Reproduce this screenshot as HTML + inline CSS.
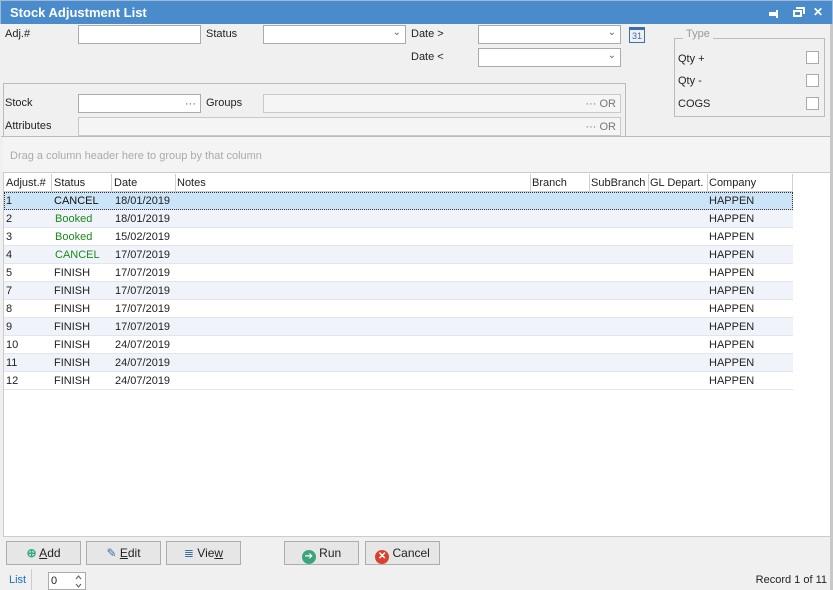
<!DOCTYPE html><html><head><style>
*{box-sizing:border-box;margin:0;padding:0}
body{width:833px;height:590px;background:#f0f0f0;font-family:"Liberation Sans",sans-serif;font-size:11px;color:#222;position:relative;overflow:hidden}
.a{position:absolute}
.tb{left:0;top:0;width:833px;height:24px;background:#4a8ccb;border:1px solid #9fb9d6;border-bottom:none}
.tt{left:9px;top:4px;color:#fff;font-weight:bold;font-size:13px}
.in{background:#fff;border:1px solid #ababab;height:19px}
.dis{background:#f5f5f5;border:1px solid #c8c8c8;height:19px}
.lbl{font-size:11px}
.dd{font-size:10px;color:#666;right:4px;top:1px;position:absolute}
.or{position:absolute;right:4px;top:3px;color:#777;font-size:11px}
.cb{width:13px;height:13px;background:#fff;border:1px solid #aaa}
.btn{height:24px;border:1px solid #adadad;background:#e6e6e6;text-align:center;line-height:22px;font-size:12px}
.row{position:absolute;left:4px;width:789px;height:18px;border-bottom:1px solid #e2e6ec;font-size:11px}
.row span{position:absolute;top:3px}
.hd span{position:absolute;top:3px}
.cl{position:absolute;top:0;height:18px;border-left:1px solid #d0d0d0}
</style></head><body>
<div class="a tb"><div class="a tt">Stock Adjustment List</div>
<div class="a" style="right:54px;top:11px;width:9px;height:4px;background:#fff"></div>
<div class="a" style="right:54px;top:9px;width:2px;height:8px;background:#fff"></div>
<div class="a" style="right:30px;top:9px;width:9px;height:7px;border:2px solid #fff"></div>
<div class="a" style="right:27px;top:6px;width:9px;height:7px;border-top:2px solid #fff;border-right:2px solid #fff"></div>
<div class="a" style="right:9px;top:4px;color:#fff;font-size:12px;font-weight:bold">✕</div></div>
<div class="a" style="right:0;top:24px;width:3px;height:566px;background:#c8c8c8"></div>

<div class="a lbl" style="left:5px;top:28px">Adj.#</div>
<div class="a in" style="left:78px;top:25px;width:123px"></div>
<div class="a lbl" style="left:206px;top:28px">Status</div>
<div class="a in" style="left:263px;top:25px;width:143px"><span class="dd">&#8964;</span></div>
<div class="a lbl" style="left:411px;top:28px">Date &gt;</div>
<div class="a in" style="left:478px;top:25px;width:143px"><span class="dd">&#8964;</span></div>
<div class="a" style="left:629px;top:27px;width:16px;height:16px;border:1px solid #3c6ea8;border-top:3px solid #3c6ea8;font-size:9px;color:#3c6ea8;text-align:center;line-height:12px">31</div>
<div class="a lbl" style="left:411px;top:51px">Date &lt;</div>
<div class="a in" style="left:478px;top:48px;width:143px"><span class="dd">&#8964;</span></div>

<div class="a" style="left:3px;top:83px;width:623px;height:54px;border:1px solid #bbb;border-bottom:none"></div>
<div class="a lbl" style="left:5px;top:97px">Stock</div>
<div class="a in" style="left:78px;top:94px;width:123px"><span class="or" style="color:#555">···</span></div>
<div class="a lbl" style="left:206px;top:97px">Groups</div>
<div class="a dis" style="left:263px;top:94px;width:358px"><span class="or">··· OR</span></div>
<div class="a lbl" style="left:5px;top:120px">Attributes</div>
<div class="a dis" style="left:78px;top:117px;width:543px"><span class="or">··· OR</span></div>

<div class="a" style="left:674px;top:38px;width:151px;height:79px;border:1px solid #bbb"></div>
<div class="a" style="left:683px;top:28px;background:#f0f0f0;padding:0 3px;color:#999">Type</div>
<div class="a lbl" style="left:678px;top:53px">Qty +</div><div class="a cb" style="left:806px;top:51px"></div>
<div class="a lbl" style="left:678px;top:75px">Qty -</div><div class="a cb" style="left:806px;top:74px"></div>
<div class="a lbl" style="left:678px;top:98px">COGS</div><div class="a cb" style="left:806px;top:97px"></div>

<div class="a" style="left:1px;top:136px;width:829px;height:1px;background:#bbb"></div>
<div class="a" style="left:3px;top:137px;width:827px;height:36px;background:#f4f4f4;border-bottom:1px solid #ccc"></div>
<div class="a" style="left:10px;top:150px;color:#aaa">Drag a column header here to group by that column</div>
<div class="a" style="left:3px;top:173px;width:827px;height:363px;background:#fff;border-left:1px solid #ccc"></div>

<div class="a hd" style="left:4px;top:174px;width:789px;height:18px;background:#fff;border-bottom:1px solid #ccc">
<span style="left:2px">Adjust.#</span><span style="left:50px">Status</span><span style="left:110px">Date</span><span style="left:173px">Notes</span><span style="left:528px">Branch</span><span style="left:587px">SubBranch</span><span style="left:646px">GL Depart.</span><span style="left:705px">Company</span>
<div class="cl" style="left:47px"></div><div class="cl" style="left:107px"></div><div class="cl" style="left:171px"></div><div class="cl" style="left:526px"></div><div class="cl" style="left:585px"></div><div class="cl" style="left:644px"></div><div class="cl" style="left:703px"></div><div class="cl" style="left:788px"></div>
</div>

<div class="row" style="top:192px;background:#cce4f7;outline:1px dotted #333;outline-offset:-1px"><span style="left:2px">1</span><span style="left:50px;color:#111">CANCEL</span><span style="left:111px">18/01/2019</span><span style="left:705px">HAPPEN</span></div>
<div class="row" style="top:210px;background:#f0f4fa"><span style="left:2px">2</span><span style="left:51px;color:#1a8a1a">Booked</span><span style="left:111px">18/01/2019</span><span style="left:705px">HAPPEN</span></div>
<div class="row" style="top:228px"><span style="left:2px">3</span><span style="left:51px;color:#1a8a1a">Booked</span><span style="left:111px">15/02/2019</span><span style="left:705px">HAPPEN</span></div>
<div class="row" style="top:246px;background:#f0f4fa"><span style="left:2px">4</span><span style="left:51px;color:#1a8a1a">CANCEL</span><span style="left:111px">17/07/2019</span><span style="left:705px">HAPPEN</span></div>
<div class="row" style="top:264px"><span style="left:2px">5</span><span style="left:50px">FINISH</span><span style="left:111px">17/07/2019</span><span style="left:705px">HAPPEN</span></div>
<div class="row" style="top:282px;background:#f0f4fa"><span style="left:2px">7</span><span style="left:50px">FINISH</span><span style="left:111px">17/07/2019</span><span style="left:705px">HAPPEN</span></div>
<div class="row" style="top:300px"><span style="left:2px">8</span><span style="left:50px">FINISH</span><span style="left:111px">17/07/2019</span><span style="left:705px">HAPPEN</span></div>
<div class="row" style="top:318px;background:#f0f4fa"><span style="left:2px">9</span><span style="left:50px">FINISH</span><span style="left:111px">17/07/2019</span><span style="left:705px">HAPPEN</span></div>
<div class="row" style="top:336px"><span style="left:2px">10</span><span style="left:50px">FINISH</span><span style="left:111px">24/07/2019</span><span style="left:705px">HAPPEN</span></div>
<div class="row" style="top:354px;background:#f0f4fa"><span style="left:2px">11</span><span style="left:50px">FINISH</span><span style="left:111px">24/07/2019</span><span style="left:705px">HAPPEN</span></div>
<div class="row" style="top:372px"><span style="left:2px">12</span><span style="left:50px">FINISH</span><span style="left:111px">24/07/2019</span><span style="left:705px">HAPPEN</span></div>

<div class="a" style="left:3px;top:536px;width:827px;height:1px;background:#ccc"></div>
<div class="a btn" style="left:6px;top:541px;width:75px"><span style="color:#3a8;font-weight:bold">⊕</span> <u>A</u>dd</div>
<div class="a btn" style="left:86px;top:541px;width:75px"><span style="color:#3c6ea8">✎</span> <u>E</u>dit</div>
<div class="a btn" style="left:166px;top:541px;width:75px"><span style="color:#3c6ea8">≣</span> Vie<u>w</u></div>
<div class="a btn" style="left:284px;top:541px;width:75px"><span style="display:inline-block;width:14px;height:14px;border-radius:7px;background:#3aa57a;color:#fff;font-size:10px;line-height:14px;vertical-align:-2px">➔</span> Run</div>
<div class="a btn" style="left:365px;top:541px;width:75px"><span style="display:inline-block;width:14px;height:14px;border-radius:7px;background:#d9412f;color:#fff;font-size:10px;line-height:14px;vertical-align:-2px;font-weight:bold">✕</span> Cancel</div>

<div class="a" style="left:31px;top:569px;width:1px;height:21px;background:#ccc"></div>
<div class="a" style="left:9px;top:574px;color:#1a6fc4">List</div>
<div class="a in" style="left:48px;top:572px;width:38px;height:18px"><span style="position:absolute;left:2px;top:2px">0</span>
<svg style="position:absolute;right:3px;top:2px" width="7" height="13"><path d="M1 4L3.5 1L6 4M1 9L3.5 12L6 9" fill="none" stroke="#666" stroke-width="1.2"/></svg></div>
<div class="a" style="right:6px;top:574px">Record 1 of 11</div>
</body></html>
